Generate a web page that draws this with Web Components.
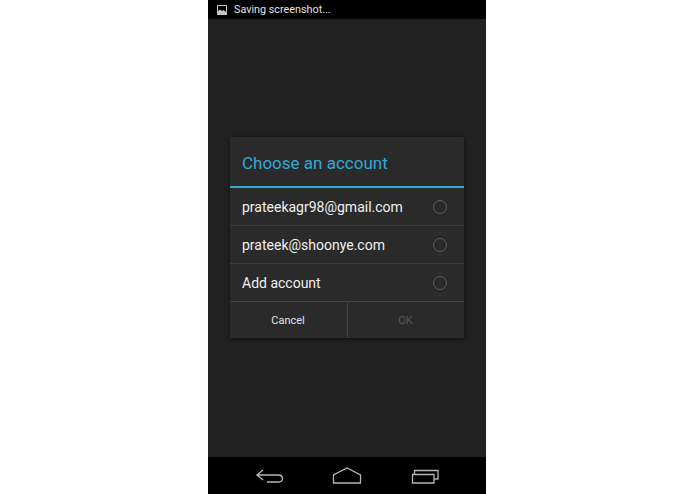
<!DOCTYPE html>
<html>
<head>
<meta charset="utf-8">
<style>
  html,body{margin:0;height:100%;background:#fff;font-family:Roboto,"Noto Sans",sans-serif;}
  body{display:flex;padding-left:208px;box-sizing:border-box;}
</style>
</head>
<body>
<phone-screen>
  <status-bar slot="top">Saving screenshot...</status-bar>
  <account-dialog title-text="Choose an account">
    <account-row>prateekagr98@gmail.com</account-row>
    <account-row>prateek@shoonye.com</account-row>
    <account-row>Add account</account-row>
  </account-dialog>
  <nav-bar slot="bottom"></nav-bar>
</phone-screen>
<script>
class PhoneScreen extends HTMLElement{
  constructor(){
    super()
    this.attachShadow({mode:'open'}).innerHTML=`
    <style>
      :host{display:flex;flex-direction:column;width:278px;height:494px;background:#212122;}
      main{flex:1;display:flex;justify-content:center;align-items:flex-start;padding-top:118px;}
    </style>
    <slot name="top"></slot>
    <main><slot></slot></main>
    <slot name="bottom"></slot>`
  }
}
class StatusBar extends HTMLElement{
  constructor(){
    super()
    this.attachShadow({mode:'open'}).innerHTML=`
    <style>
      :host{display:flex;align-items:center;height:19px;background:#000;color:#e0e0e0;font-size:10.8px;padding-left:9px;box-sizing:border-box;}
      svg{width:10px;height:10px;margin-right:7px;flex:none;}
    </style>
    <svg viewBox="0 0 10 10"><rect x=".5" y=".5" width="9" height="9" fill="none" stroke="#c4c4c4"/><path d="M1 9V6l2-1.5L5 6l1.5-1L9 7v2z" fill="#c4c4c4"/></svg>
    <slot></slot>`
  }
}
class AccountDialog extends HTMLElement{
  constructor(){
    super()
    this.attachShadow({mode:'open'}).innerHTML=`
    <style>
      :host{display:block;width:234px;margin-left:-1px;background:#2a2a2a;box-shadow:0 1px 4px rgba(0,0,0,.55);}
      h2{margin:0;height:49px;line-height:53px;padding-left:12.500px;font-size:17px;font-weight:400;color:#33a9d6;border-bottom:2px solid #33a9d6;}
      .buttons{display:flex;height:36px;border-top:1px solid #424242;}
      .buttons div{flex:1;display:flex;align-items:center;justify-content:center;font-size:11px;color:#e2e2e2;}
      .buttons div:first-child{flex:0 0 117px;}
      .buttons div+div{border-left:1px solid #424242;color:#585858;}
    </style>
    <h2></h2>
    <slot></slot>
    <div class="buttons"><div>Cancel</div><div>OK</div></div>`
    this.shadowRoot.querySelector('h2').textContent=this.getAttribute('title-text')
  }
}
class AccountRow extends HTMLElement{
  constructor(){
    super()
    this.attachShadow({mode:'open'}).innerHTML=`
    <style>
      :host{display:flex;align-items:center;justify-content:space-between;height:37px;padding:0 17px 0 12.500px;color:#f0f0f0;font-size:14px;}
      :host(:not(:last-child)){border-bottom:1px solid #3d3d3d;}
      i{width:12px;height:12px;border:1px solid #5e5e5e;border-radius:50%;}
    </style>
    <slot></slot><i></i>`
  }
}
class NavBar extends HTMLElement{
  constructor(){
    super()
    this.attachShadow({mode:'open'}).innerHTML=`
    <style>
      :host{display:block;height:37px;background:#000;}
      svg{display:block;width:278px;height:37px;}
      path{fill:none;stroke:#b5b5b5;stroke-width:1.3;}
    </style>
    <svg viewBox="0 0 278 37">
      <path d="M55 13l-6 5 6 5M49 18h21q4.500 0 4.500 3.500t-4.500 3.500H59"/>
      <path d="M125.500 26V18l13.500-7 13.500 7v8z"/>
      <path d="M204.500 17.500h21.500v8.500h-21.500zM206.500 17V13.500h23.500v8.500h-4"/>
    </svg>`
  }
}
customElements.define('phone-screen',PhoneScreen)
customElements.define('status-bar',StatusBar)
customElements.define('account-dialog',AccountDialog)
customElements.define('account-row',AccountRow)
customElements.define('nav-bar',NavBar)
</script>
</body>
</html>
